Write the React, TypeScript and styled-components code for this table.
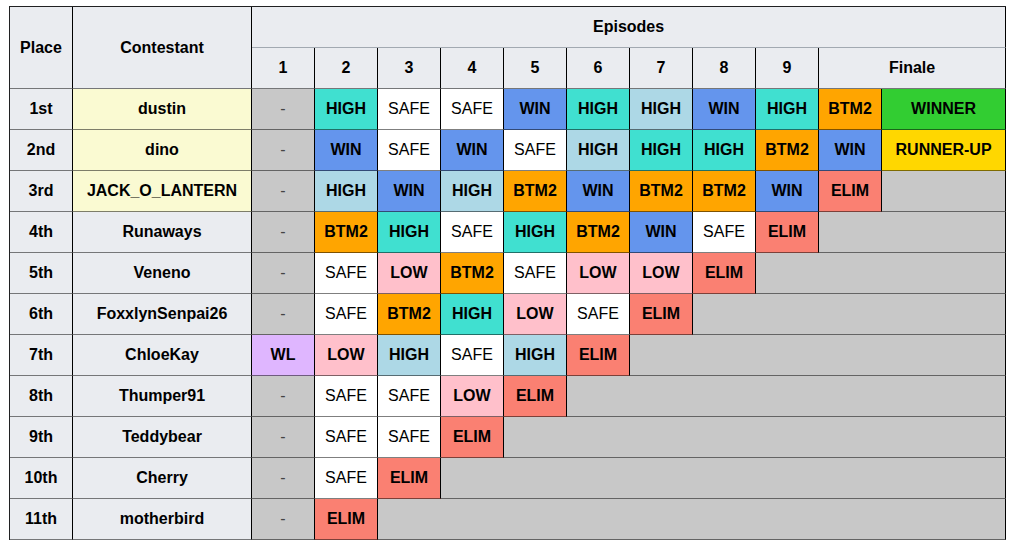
import React from 'react';
import styled, { createGlobalStyle } from 'styled-components';

type Result =
  | 'DASH' | 'SAFE' | 'HIGH' | 'HIGH2' | 'WIN' | 'BTM2' | 'LOW'
  | 'ELIM' | 'WL' | 'WINNER' | 'RUNNER' | 'OUT';

interface Row {
  place: string;
  name: string;
  results: Result[];
  highlight?: boolean;
}

const colours: Record<Result, string> = {
  DASH: '#c8c8c8',
  SAFE: '#ffffff',
  HIGH: '#40e0d0',
  HIGH2: '#add8e6',
  WIN: '#6495ed',
  BTM2: '#ffa500',
  LOW: '#ffc0cb',
  ELIM: '#fa8072',
  WL: '#dfb6ff',
  WINNER: '#32cd32',
  RUNNER: '#ffd700',
  OUT: '#c8c8c8',
};

const labels: Record<Result, string> = {
  DASH: '-',
  SAFE: 'SAFE',
  HIGH: 'HIGH',
  HIGH2: 'HIGH',
  WIN: 'WIN',
  BTM2: 'BTM2',
  LOW: 'LOW',
  ELIM: 'ELIM',
  WL: 'WL',
  WINNER: 'WINNER',
  RUNNER: 'RUNNER-UP',
  OUT: '',
};

const rows: Row[] = [
  { place: '1st', name: 'dustin', highlight: true, results: ['DASH', 'HIGH', 'SAFE', 'SAFE', 'WIN', 'HIGH', 'HIGH2', 'WIN', 'HIGH', 'BTM2', 'WINNER'] },
  { place: '2nd', name: 'dino', highlight: true, results: ['DASH', 'WIN', 'SAFE', 'WIN', 'SAFE', 'HIGH2', 'HIGH', 'HIGH', 'BTM2', 'WIN', 'RUNNER'] },
  { place: '3rd', name: 'JACK_O_LANTERN', highlight: true, results: ['DASH', 'HIGH2', 'WIN', 'HIGH2', 'BTM2', 'WIN', 'BTM2', 'BTM2', 'WIN', 'ELIM'] },
  { place: '4th', name: 'Runaways', results: ['DASH', 'BTM2', 'HIGH', 'SAFE', 'HIGH', 'BTM2', 'WIN', 'SAFE', 'ELIM'] },
  { place: '5th', name: 'Veneno', results: ['DASH', 'SAFE', 'LOW', 'BTM2', 'SAFE', 'LOW', 'LOW', 'ELIM'] },
  { place: '6th', name: 'FoxxlynSenpai26', results: ['DASH', 'SAFE', 'BTM2', 'HIGH', 'LOW', 'SAFE', 'ELIM'] },
  { place: '7th', name: 'ChloeKay', results: ['WL', 'LOW', 'HIGH2', 'SAFE', 'HIGH2', 'ELIM'] },
  { place: '8th', name: 'Thumper91', results: ['DASH', 'SAFE', 'SAFE', 'LOW', 'ELIM'] },
  { place: '9th', name: 'Teddybear', results: ['DASH', 'SAFE', 'SAFE', 'ELIM'] },
  { place: '10th', name: 'Cherry', results: ['DASH', 'SAFE', 'ELIM'] },
  { place: '11th', name: 'motherbird', results: ['DASH', 'ELIM'] },
];

const TOTAL_COLS = 11;

const GlobalStyle = createGlobalStyle`
  body {
    margin: 0;
    padding: 6px 0 0 9px;
    background: #ffffff;
    font-family: "Liberation Sans", Arial, sans-serif;
    color: #202122;
  }
`;

const Table = styled.table`
  width: 997px;
  table-layout: fixed;
  border-collapse: separate;
  border-spacing: 0;
  border-top: 1px solid #202122;
  border-left: 1px solid #202122;
  font-size: 16px;
`;

const Tr = styled.tr`
  height: 41px;
`;

const Cell = styled.td<{ $bg: string; $bold?: boolean }>`
  box-sizing: border-box;
  padding: 0;
  height: 41px;
  text-align: center;
  vertical-align: middle;
  background: ${(p) => p.$bg};
  font-weight: ${(p) => (p.$bold ? 700 : 400)};
  border-right: 1px solid #000;
  border-bottom: 1px solid rgba(0, 0, 0, 0.5);
  white-space: nowrap;
  color: #000;
`;

const Head = styled.th<{ $light?: boolean }>`
  box-sizing: border-box;
  padding: 0;
  height: 41px;
  text-align: center;
  vertical-align: middle;
  background: #eaecf0;
  font-weight: 700;
  color: #000;
  border-right: 1px solid #000;
  border-bottom: 1px solid ${(p) => (p.$light ? '#a2a9b1' : 'rgba(0, 0, 0, 0.5)')};
`;

const Dash = styled.span`
  color: #444;
`;

const App: React.FC = () => {
  return (
    <>
      <GlobalStyle />
      <Table>
        <colgroup>
          <col style={{ width: 63 }} />
          <col style={{ width: 179 }} />
          {Array.from({ length: 10 }).map((_, i) => (
            <col key={i} style={{ width: 63 }} />
          ))}
          <col style={{ width: 124 }} />
        </colgroup>
        <thead>
          <Tr>
            <Head rowSpan={2}>Place</Head>
            <Head rowSpan={2}>Contestant</Head>
            <Head colSpan={TOTAL_COLS} $light>Episodes</Head>
          </Tr>
          <Tr>
            {[1, 2, 3, 4, 5, 6, 7, 8, 9].map((n) => (
              <Head key={n}>{n}</Head>
            ))}
            <Head colSpan={2}>Finale</Head>
          </Tr>
        </thead>
        <tbody>
          {rows.map((row) => {
            const rest = TOTAL_COLS - row.results.length;
            return (
              <Tr key={row.place}>
                <Cell $bg="#eaecf0" $bold>{row.place}</Cell>
                <Cell $bg={row.highlight ? '#fafad2' : '#eaecf0'} $bold>{row.name}</Cell>
                {row.results.map((r, i) => (
                  <Cell key={i} $bg={colours[r]} $bold={r !== 'SAFE' && r !== 'DASH'}>
                    {r === 'DASH' ? <Dash>-</Dash> : labels[r]}
                  </Cell>
                ))}
                {rest > 0 && <Cell $bg={colours.OUT} colSpan={rest} />}
              </Tr>
            );
          })}
        </tbody>
      </Table>
    </>
  );
};

export default App;
